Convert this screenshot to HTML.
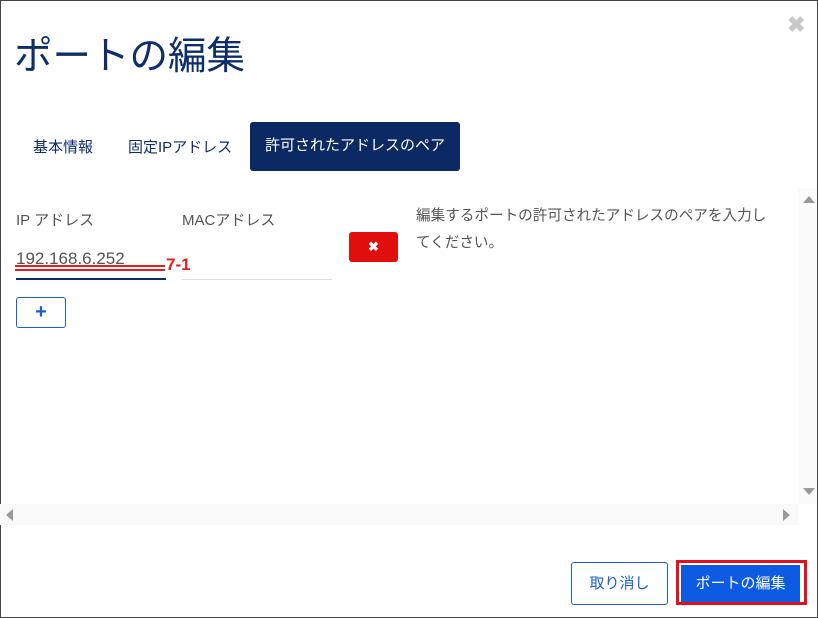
<!DOCTYPE html>
<html><head><meta charset="utf-8"><style>
body{margin:0;width:818px;height:618px;position:relative;overflow:hidden;background:#fff;font-family:"Liberation Sans","Noto Sans CJK JP",sans-serif;}
.a{position:absolute;white-space:nowrap}
</style></head><body>
<div class="a" style="left:0;top:0;width:816px;height:616px;border:1px solid #444;"></div>
<div class="a" style="left:14px;top:25px;font-size:38.5px;color:#0d2d6b;">ポートの編集</div>
<div class="a" style="left:787px;top:12px;font-size:22px;color:#c8c8c8;font-weight:bold;">✖</div>
<div class="a" style="left:33px;top:136px;font-size:15px;color:#0d2d6b;">基本情報</div>
<div class="a" style="left:128px;top:136px;font-size:15px;color:#0d2d6b;">固定IPアドレス</div>
<div class="a" style="left:250px;top:122px;width:210px;height:49px;background:#0b2a63;border-radius:3px;color:#fff;font-size:15px;line-height:47px;text-align:center;">許可されたアドレスのペア</div>
<div class="a" style="left:798px;top:188px;width:19px;height:316px;background:#fbfbfb;"></div>
<div class="a" style="left:0;top:504px;width:798px;height:21px;background:#f9f9f9;"></div>
<div class="a" style="left:803px;top:196px;width:0;height:0;border-left:6px solid transparent;border-right:6px solid transparent;border-bottom:7px solid #999;"></div>
<div class="a" style="left:803px;top:488px;width:0;height:0;border-left:6px solid transparent;border-right:6px solid transparent;border-top:7px solid #999;"></div>
<div class="a" style="left:783px;top:509px;width:0;height:0;border-top:6px solid transparent;border-bottom:6px solid transparent;border-left:7px solid #999;"></div>
<div class="a" style="left:6px;top:509px;width:0;height:0;border-top:6px solid transparent;border-bottom:6px solid transparent;border-right:7px solid #999;"></div>
<div class="a" style="left:16px;top:209px;font-size:15px;color:#555;">IP アドレス</div>
<div class="a" style="left:182px;top:209px;font-size:15px;color:#555;">MACアドレス</div>
<div class="a" style="left:16px;top:249px;font-size:17px;color:#555;">192.168.6.252</div>
<div class="a" style="left:15px;top:265px;width:150px;height:2px;background:#e61b1b;"></div>
<div class="a" style="left:15px;top:269px;width:150px;height:2px;background:#e61b1b;"></div>
<div class="a" style="left:16px;top:278px;width:150px;height:2px;background:#0d2d6b;"></div>
<div class="a" style="left:166px;top:255px;font-size:17px;color:#e61b1b;font-weight:bold;">7-1</div>
<div class="a" style="left:182px;top:279px;width:150px;height:1px;background:#ddd;"></div>
<div class="a" style="left:349px;top:232px;width:49px;height:30px;background:#e10e0e;border-radius:3px;color:#fff;font-size:13px;font-weight:bold;line-height:30px;text-align:center;">✖</div>
<div class="a" style="left:16px;top:297px;width:48px;height:29px;border:1px solid #1a5fd6;border-radius:3px;color:#1a5fd6;font-size:20px;font-weight:bold;line-height:28px;text-align:center;">+</div>
<div class="a" style="left:416px;top:203px;font-size:14.6px;color:#555;line-height:27px;">編集するポートの許可されたアドレスのペアを入力し<br>てください。</div>
<div class="a" style="left:571px;top:562px;width:95px;height:41px;border:1px solid #1a5fd6;border-radius:3px;color:#1a5fd6;font-size:15px;line-height:41px;text-align:center;">取り消し</div>
<div class="a" style="left:676px;top:560px;width:125px;height:39px;border:3px solid #e4101d;"></div>
<div class="a" style="left:681px;top:565px;width:119px;height:37px;background:#0d5be3;color:#fff;font-size:15px;line-height:37px;text-align:center;">ポートの編集</div>
</body></html>
